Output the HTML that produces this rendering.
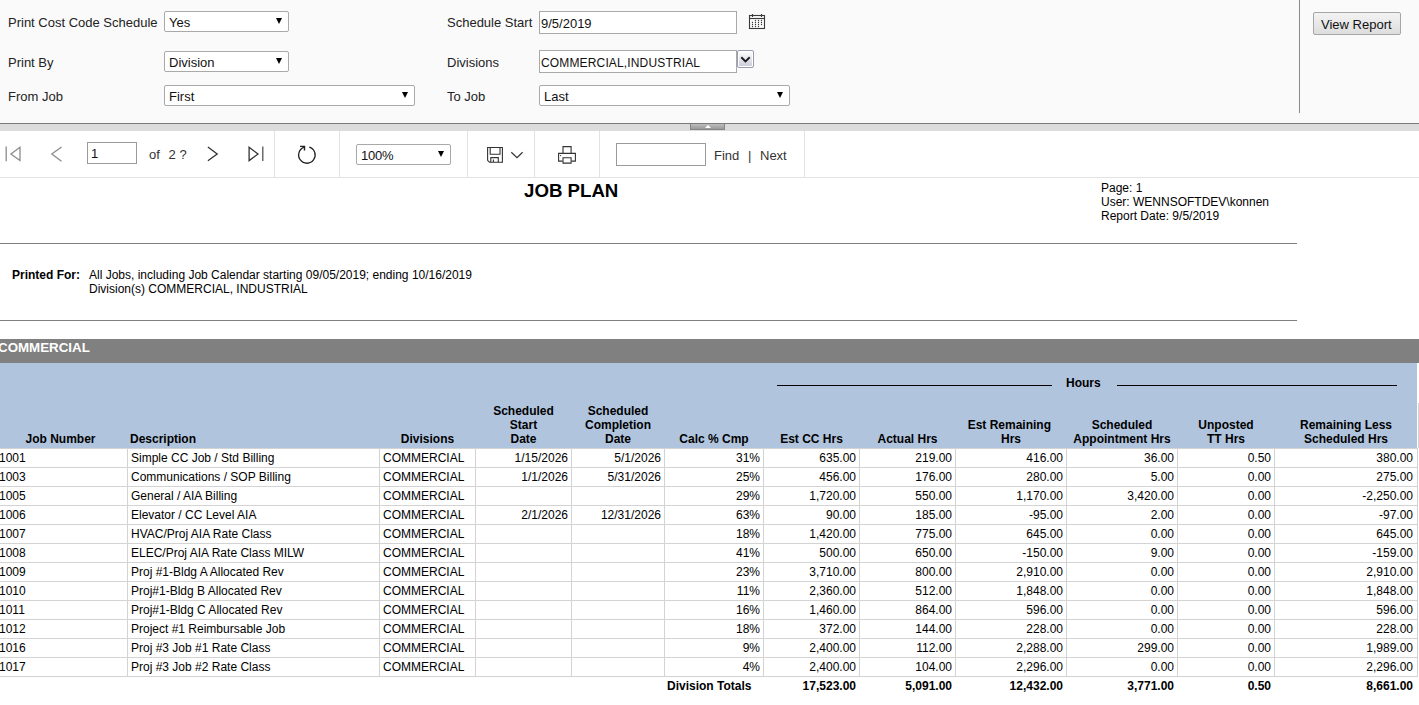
<!DOCTYPE html>
<html><head><meta charset="utf-8">
<style>
*{box-sizing:border-box}
html,body{margin:0;padding:0}
body{width:1419px;height:705px;overflow:hidden;position:relative;background:#fff;font-family:"Liberation Sans",sans-serif;color:#000}
.a{position:absolute}
#params{left:0;top:0;width:1419px;height:123px;background:#fafafa}
.lbl{position:absolute;font-size:13px;color:#222;white-space:nowrap;line-height:15px}
.sel{position:absolute;background:#fff;border:1px solid #a9a9a9;border-radius:2px;font-size:13px;color:#111;line-height:15px;padding-left:4px;white-space:nowrap}
.sel .arr{position:absolute;width:0;height:0;border-left:3.5px solid transparent;border-right:3.5px solid transparent;border-top:6px solid #000}
.inp{position:absolute;background:#fff;border:1px solid #a9a9a9;font-size:13px;color:#111;line-height:15px;padding-left:2px;white-space:nowrap}
#splitter{left:0;top:123px;width:1419px;height:8px;border-top:1px solid #7a7a7a;background:#dcdcdc}
#tb{left:0;top:131px;width:1419px;height:47px;background:#fff;border-bottom:1px solid #e2e2e2}
.sep{position:absolute;top:0;width:1px;height:46px;background:#e2e2e2}
.tbt{position:absolute;font-size:13px;color:#333;white-space:nowrap;line-height:15px}
.rep{position:absolute;font-size:12px;line-height:14px;white-space:nowrap;color:#000}
.hr{position:absolute;height:1px;background:#808080}
table.d{position:absolute;border-collapse:collapse;table-layout:fixed;font-size:12px}
table.d td{border:1px solid #d3d3d3;height:19px;padding:0 3px;line-height:14px;white-space:nowrap;overflow:hidden}
table.d td.r{text-align:right}
.vl{position:absolute;top:448px;width:1px;height:229px;background:#d3d3d3}
.hl{position:absolute;left:0;width:1418px;height:1px;background:#d3d3d3}
.ct{position:absolute;font-size:12px;line-height:14px;white-space:nowrap;color:#000}
.ct.r{text-align:right}
.b{font-weight:bold}
.ht{position:absolute;font-size:12px;line-height:14px;white-space:nowrap;font-weight:bold;color:#000}
.ht.c{text-align:center}
</style></head>
<body>
<div id="params" class="a">
  <div class="lbl" style="left:8px;top:15px">Print Cost Code Schedule</div>
  <div class="sel" style="left:164px;top:11px;width:125px;height:21px"><span style="position:absolute;left:4px;top:3px">Yes</span><span class="arr" style="left:111px;top:6px"></span></div>
  <div class="lbl" style="left:8px;top:55px">Print By</div>
  <div class="sel" style="left:164px;top:51px;width:125px;height:21px"><span style="position:absolute;left:4px;top:3px">Division</span><span class="arr" style="left:111px;top:6px"></span></div>
  <div class="lbl" style="left:8px;top:89px">From Job</div>
  <div class="sel" style="left:164px;top:85px;width:251px;height:21px"><span style="position:absolute;left:4px;top:3px">First</span><span class="arr" style="left:237px;top:6px"></span></div>

  <div class="lbl" style="left:447px;top:15px">Schedule Start</div>
  <div class="inp" style="left:539px;top:11px;width:198px;height:23px"><span style="position:absolute;left:1px;top:4px">9/5/2019</span></div>
  <div class="lbl" style="left:447px;top:55px">Divisions</div>
  <div class="inp" style="left:539px;top:50px;width:198px;height:23px"><span style="position:absolute;left:1px;top:5px;font-size:12px;letter-spacing:0.15px">COMMERCIAL,INDUSTRIAL</span></div>
  <svg class="a" style="left:745px;top:10px" width="25" height="22" viewBox="745 10 25 22" fill="none">
    <rect x="749.5" y="15.5" width="15" height="13" stroke="#3a3a3a" stroke-width="1.1"/>
    <line x1="749.5" y1="18.5" x2="764.5" y2="18.5" stroke="#3a3a3a" stroke-width="1.1"/>
    <line x1="752.5" y1="14" x2="752.5" y2="17" stroke="#3a3a3a" stroke-width="1.1"/>
    <line x1="761.5" y1="14" x2="761.5" y2="17" stroke="#3a3a3a" stroke-width="1.1"/>
    <g fill="#3a3a3a">
      <circle cx="755.5" cy="20.5" r="0.65"/><circle cx="758.5" cy="20.5" r="0.65"/><circle cx="761.5" cy="20.5" r="0.65"/>
      <circle cx="752.5" cy="22.5" r="0.65"/><circle cx="755.5" cy="22.5" r="0.65"/><circle cx="758.5" cy="22.5" r="0.65"/><circle cx="761.5" cy="22.5" r="0.65"/>
      <circle cx="752.5" cy="24.5" r="0.65"/><circle cx="755.5" cy="24.5" r="0.65"/><circle cx="758.5" cy="24.5" r="0.65"/><circle cx="761.5" cy="24.5" r="0.65"/>
      <circle cx="752.5" cy="26.5" r="0.65"/><circle cx="755.5" cy="26.5" r="0.65"/><circle cx="758.5" cy="26.5" r="0.65"/>
    </g>
  </svg>
  <div class="a" style="left:737px;top:50px;width:17px;height:18px;border:1px solid #999bb0;border-radius:2px;background:linear-gradient(#ffffff,#c8cad9);box-shadow:inset 0 0 0 1px #fff"></div>
  <svg class="a" style="left:737px;top:50px" width="17" height="18" viewBox="737 50 17 18" fill="none"><path d="M741.3 57.3 L745.5 61.4 L749.7 57.3" stroke="#1a1a1a" stroke-width="1.9"/></svg>
  <div class="lbl" style="left:447px;top:89px">To Job</div>
  <div class="sel" style="left:539px;top:85px;width:251px;height:21px"><span style="position:absolute;left:4px;top:3px">Last</span><span class="arr" style="left:237px;top:6px"></span></div>

  <div class="a" style="left:1299px;top:0;width:1px;height:113px;background:#8a8a8a"></div>
  <div class="a" style="left:1313px;top:12px;width:88px;height:23px;border:1px solid #a6a6a6;border-radius:2px;background:linear-gradient(#f3f3f3,#dddddd);font-size:13px;color:#111;line-height:15px"><span style="position:absolute;left:7px;top:4px">View Report</span></div>
</div>
<div id="splitter" class="a"><div class="a" style="left:690px;top:0;width:35px;height:6px;border:1px solid #858585;border-top:0;background:linear-gradient(#bdbdbd,#9a9a9a)"><span class="a" style="left:14px;top:1px;width:0;height:0;border-left:3px solid transparent;border-right:3px solid transparent;border-bottom:3px solid #fff"></span></div></div>

<div id="tb" class="a">
  <div class="sep" style="left:274px"></div>
  <div class="sep" style="left:339px"></div>
  <div class="sep" style="left:467px"></div>
  <div class="sep" style="left:534px"></div>
  <div class="sep" style="left:599px"></div>
  <div class="sep" style="left:804px"></div>
  <svg class="a" style="left:0;top:0" width="830" height="46" viewBox="0 131 830 46" fill="none">
    <g stroke="#8c8c8c" stroke-width="1.3">
      <line x1="6.2" y1="146.4" x2="6.2" y2="161.3"/>
      <path d="M20 147.2 L10.9 154.1 L20 160.6 Z" stroke-linejoin="miter"/>
      <path d="M61.5 146.9 L51.8 154.1 L61.5 161.2"/>
    </g>
    <g stroke="#333" stroke-width="1.3">
      <path d="M207.9 147.1 L217.2 154 L207.9 160.7"/>
      <path d="M249.1 147.2 L258 154 L249.1 160.6 Z"/>
    </g>
    <line x1="262.8" y1="146.5" x2="262.8" y2="161.1" stroke="#555" stroke-width="1.3"/>
    <g stroke="#222" stroke-width="1.3">
      <path d="M309.3 147.1 A 8.25 8.25 0 1 1 304.2 147.2"/>
      <path d="M300 146.4 L304.5 146.4 L304.5 150.6" stroke-width="1.4"/>
    </g>
    <g stroke="#333" stroke-width="1.1">
      <path d="M487.6 147.5 H502.4 V162.2 H489.5 L487.6 160.3 Z"/>
      <path d="M490.2 147.5 V154.3 H500 V147.5"/>
      <path d="M490.8 162.2 V157.6 H498.3 V162.2"/>
      <line x1="493.4" y1="159.6" x2="493.4" y2="162" />
    </g>
    <path d="M511.3 152.3 L517 157.6 L522.6 152.3" stroke="#333" stroke-width="1.2"/>
    <g stroke="#333" stroke-width="1.1">
      <path d="M563 153 V146.6 H571.1 V153"/>
      <path d="M562.6 161.1 H558.6 V153.4 H575.4 V161.1 H571.4"/>
      <path d="M563 157.8 H571.1 V163.1 H563 Z"/>
    </g>
    <circle cx="560.6" cy="155.6" r="0.6" fill="#333"/>
  </svg>
  <div class="a" style="left:87px;top:11px;width:50px;height:22px;border:1px solid #9a9a9a;background:#fff"></div>
  <div class="tbt" style="left:91px;top:15px;color:#111">1</div>
  <div class="tbt" style="left:149px;top:16px">of</div><div class="tbt" style="left:168.5px;top:16px">2</div><div class="tbt" style="left:179.5px;top:16px">?</div>
  <div class="a" style="left:356px;top:13px;width:95px;height:21px;border:1px solid #a9a9a9;border-radius:2px;background:#fff"><span class="tbt" style="left:4px;top:3px;color:#111;letter-spacing:-0.2px">100%</span><span class="a" style="left:81px;top:6px;width:0;height:0;border-left:3px solid transparent;border-right:3px solid transparent;border-top:6px solid #000"></span></div>
  <div class="a" style="left:616px;top:12px;width:90px;height:23px;border:1px solid #9a9a9a;background:#fff"></div>
  <div class="tbt" style="left:714px;top:17px">Find</div>
  <div class="tbt" style="left:748px;top:17px">|</div>
  <div class="tbt" style="left:760px;top:17px">Next</div>
</div>

<div id="report">
  <div class="rep" style="left:524px;top:181px;font-size:18.67px;font-weight:bold;line-height:20px">JOB PLAN</div>
  <div class="rep" style="left:1101px;top:181px">Page: 1<br>User: WENNSOFTDEV\konnen<br>Report Date: 9/5/2019</div>
  <div class="hr" style="left:0;top:243px;width:1297px"></div>
  <div class="rep" style="left:12px;top:268px;font-weight:bold">Printed For:</div>
  <div class="rep" style="left:89px;top:268px">All Jobs, including Job Calendar starting 09/05/2019; ending 10/16/2019<br>Division(s) COMMERCIAL, INDUSTRIAL</div>
  <div class="hr" style="left:0;top:320px;width:1297px"></div>
  <div class="a" style="left:0;top:339px;width:1419px;height:24px;background:#808080"></div>
  <div class="rep" style="left:-2px;top:340px;font-size:13.33px;font-weight:bold;color:#fff;line-height:15px">COMMERCIAL</div>
  <div class="a" style="left:0;top:363px;width:1417px;height:85px;background:#b0c4de"></div>
<div class="a" style="left:777px;top:385px;width:275px;height:1px;background:#000"></div>
<div class="ht" style="left:1066px;top:376px">Hours</div>
<div class="a" style="left:1117px;top:385px;width:280px;height:1px;background:#000"></div>
<!--T-->
<div class="vl" style="left:127px"></div>
<div class="vl" style="left:379px"></div>
<div class="vl" style="left:475px"></div>
<div class="vl" style="left:571px"></div>
<div class="vl" style="left:664px"></div>
<div class="vl" style="left:763px"></div>
<div class="vl" style="left:859px"></div>
<div class="vl" style="left:955px"></div>
<div class="vl" style="left:1066px"></div>
<div class="vl" style="left:1177px"></div>
<div class="vl" style="left:1274px"></div>
<div class="vl" style="left:1417px"></div>
<div class="hl" style="top:448px"></div>
<div class="hl" style="top:467px"></div>
<div class="hl" style="top:486px"></div>
<div class="hl" style="top:505px"></div>
<div class="hl" style="top:524px"></div>
<div class="hl" style="top:543px"></div>
<div class="hl" style="top:562px"></div>
<div class="hl" style="top:581px"></div>
<div class="hl" style="top:600px"></div>
<div class="hl" style="top:619px"></div>
<div class="hl" style="top:638px"></div>
<div class="hl" style="top:657px"></div>
<div class="hl" style="top:676px"></div>
<div class="ct" style="left:-1px;top:451px">1001</div>
<div class="ct" style="left:131px;top:451px">Simple CC Job / Std Billing</div>
<div class="ct" style="left:383px;top:451px">COMMERCIAL</div>
<div class="ct r" style="left:476px;width:92px;top:451px">1/15/2026</div>
<div class="ct r" style="left:572px;width:89px;top:451px">5/1/2026</div>
<div class="ct r" style="left:665px;width:95px;top:451px">31%</div>
<div class="ct r" style="left:764px;width:92px;top:451px">635.00</div>
<div class="ct r" style="left:860px;width:92px;top:451px">219.00</div>
<div class="ct r" style="left:956px;width:107px;top:451px">416.00</div>
<div class="ct r" style="left:1067px;width:107px;top:451px">36.00</div>
<div class="ct r" style="left:1178px;width:93px;top:451px">0.50</div>
<div class="ct r" style="left:1275px;width:138px;top:451px">380.00</div>
<div class="ct" style="left:-1px;top:470px">1003</div>
<div class="ct" style="left:131px;top:470px">Communications / SOP Billing</div>
<div class="ct" style="left:383px;top:470px">COMMERCIAL</div>
<div class="ct r" style="left:476px;width:92px;top:470px">1/1/2026</div>
<div class="ct r" style="left:572px;width:89px;top:470px">5/31/2026</div>
<div class="ct r" style="left:665px;width:95px;top:470px">25%</div>
<div class="ct r" style="left:764px;width:92px;top:470px">456.00</div>
<div class="ct r" style="left:860px;width:92px;top:470px">176.00</div>
<div class="ct r" style="left:956px;width:107px;top:470px">280.00</div>
<div class="ct r" style="left:1067px;width:107px;top:470px">5.00</div>
<div class="ct r" style="left:1178px;width:93px;top:470px">0.00</div>
<div class="ct r" style="left:1275px;width:138px;top:470px">275.00</div>
<div class="ct" style="left:-1px;top:489px">1005</div>
<div class="ct" style="left:131px;top:489px">General / AIA Billing</div>
<div class="ct" style="left:383px;top:489px">COMMERCIAL</div>
<div class="ct r" style="left:665px;width:95px;top:489px">29%</div>
<div class="ct r" style="left:764px;width:92px;top:489px">1,720.00</div>
<div class="ct r" style="left:860px;width:92px;top:489px">550.00</div>
<div class="ct r" style="left:956px;width:107px;top:489px">1,170.00</div>
<div class="ct r" style="left:1067px;width:107px;top:489px">3,420.00</div>
<div class="ct r" style="left:1178px;width:93px;top:489px">0.00</div>
<div class="ct r" style="left:1275px;width:138px;top:489px">-2,250.00</div>
<div class="ct" style="left:-1px;top:508px">1006</div>
<div class="ct" style="left:131px;top:508px">Elevator / CC Level AIA</div>
<div class="ct" style="left:383px;top:508px">COMMERCIAL</div>
<div class="ct r" style="left:476px;width:92px;top:508px">2/1/2026</div>
<div class="ct r" style="left:572px;width:89px;top:508px">12/31/2026</div>
<div class="ct r" style="left:665px;width:95px;top:508px">63%</div>
<div class="ct r" style="left:764px;width:92px;top:508px">90.00</div>
<div class="ct r" style="left:860px;width:92px;top:508px">185.00</div>
<div class="ct r" style="left:956px;width:107px;top:508px">-95.00</div>
<div class="ct r" style="left:1067px;width:107px;top:508px">2.00</div>
<div class="ct r" style="left:1178px;width:93px;top:508px">0.00</div>
<div class="ct r" style="left:1275px;width:138px;top:508px">-97.00</div>
<div class="ct" style="left:-1px;top:527px">1007</div>
<div class="ct" style="left:131px;top:527px">HVAC/Proj AIA Rate Class</div>
<div class="ct" style="left:383px;top:527px">COMMERCIAL</div>
<div class="ct r" style="left:665px;width:95px;top:527px">18%</div>
<div class="ct r" style="left:764px;width:92px;top:527px">1,420.00</div>
<div class="ct r" style="left:860px;width:92px;top:527px">775.00</div>
<div class="ct r" style="left:956px;width:107px;top:527px">645.00</div>
<div class="ct r" style="left:1067px;width:107px;top:527px">0.00</div>
<div class="ct r" style="left:1178px;width:93px;top:527px">0.00</div>
<div class="ct r" style="left:1275px;width:138px;top:527px">645.00</div>
<div class="ct" style="left:-1px;top:546px">1008</div>
<div class="ct" style="left:131px;top:546px">ELEC/Proj AIA Rate Class MILW</div>
<div class="ct" style="left:383px;top:546px">COMMERCIAL</div>
<div class="ct r" style="left:665px;width:95px;top:546px">41%</div>
<div class="ct r" style="left:764px;width:92px;top:546px">500.00</div>
<div class="ct r" style="left:860px;width:92px;top:546px">650.00</div>
<div class="ct r" style="left:956px;width:107px;top:546px">-150.00</div>
<div class="ct r" style="left:1067px;width:107px;top:546px">9.00</div>
<div class="ct r" style="left:1178px;width:93px;top:546px">0.00</div>
<div class="ct r" style="left:1275px;width:138px;top:546px">-159.00</div>
<div class="ct" style="left:-1px;top:565px">1009</div>
<div class="ct" style="left:131px;top:565px">Proj #1-Bldg A Allocated Rev</div>
<div class="ct" style="left:383px;top:565px">COMMERCIAL</div>
<div class="ct r" style="left:665px;width:95px;top:565px">23%</div>
<div class="ct r" style="left:764px;width:92px;top:565px">3,710.00</div>
<div class="ct r" style="left:860px;width:92px;top:565px">800.00</div>
<div class="ct r" style="left:956px;width:107px;top:565px">2,910.00</div>
<div class="ct r" style="left:1067px;width:107px;top:565px">0.00</div>
<div class="ct r" style="left:1178px;width:93px;top:565px">0.00</div>
<div class="ct r" style="left:1275px;width:138px;top:565px">2,910.00</div>
<div class="ct" style="left:-1px;top:584px">1010</div>
<div class="ct" style="left:131px;top:584px">Proj#1-Bldg B Allocated Rev</div>
<div class="ct" style="left:383px;top:584px">COMMERCIAL</div>
<div class="ct r" style="left:665px;width:95px;top:584px">11%</div>
<div class="ct r" style="left:764px;width:92px;top:584px">2,360.00</div>
<div class="ct r" style="left:860px;width:92px;top:584px">512.00</div>
<div class="ct r" style="left:956px;width:107px;top:584px">1,848.00</div>
<div class="ct r" style="left:1067px;width:107px;top:584px">0.00</div>
<div class="ct r" style="left:1178px;width:93px;top:584px">0.00</div>
<div class="ct r" style="left:1275px;width:138px;top:584px">1,848.00</div>
<div class="ct" style="left:-1px;top:603px">1011</div>
<div class="ct" style="left:131px;top:603px">Proj#1-Bldg C Allocated Rev</div>
<div class="ct" style="left:383px;top:603px">COMMERCIAL</div>
<div class="ct r" style="left:665px;width:95px;top:603px">16%</div>
<div class="ct r" style="left:764px;width:92px;top:603px">1,460.00</div>
<div class="ct r" style="left:860px;width:92px;top:603px">864.00</div>
<div class="ct r" style="left:956px;width:107px;top:603px">596.00</div>
<div class="ct r" style="left:1067px;width:107px;top:603px">0.00</div>
<div class="ct r" style="left:1178px;width:93px;top:603px">0.00</div>
<div class="ct r" style="left:1275px;width:138px;top:603px">596.00</div>
<div class="ct" style="left:-1px;top:622px">1012</div>
<div class="ct" style="left:131px;top:622px">Project #1 Reimbursable Job</div>
<div class="ct" style="left:383px;top:622px">COMMERCIAL</div>
<div class="ct r" style="left:665px;width:95px;top:622px">18%</div>
<div class="ct r" style="left:764px;width:92px;top:622px">372.00</div>
<div class="ct r" style="left:860px;width:92px;top:622px">144.00</div>
<div class="ct r" style="left:956px;width:107px;top:622px">228.00</div>
<div class="ct r" style="left:1067px;width:107px;top:622px">0.00</div>
<div class="ct r" style="left:1178px;width:93px;top:622px">0.00</div>
<div class="ct r" style="left:1275px;width:138px;top:622px">228.00</div>
<div class="ct" style="left:-1px;top:641px">1016</div>
<div class="ct" style="left:131px;top:641px">Proj #3 Job #1 Rate Class</div>
<div class="ct" style="left:383px;top:641px">COMMERCIAL</div>
<div class="ct r" style="left:665px;width:95px;top:641px">9%</div>
<div class="ct r" style="left:764px;width:92px;top:641px">2,400.00</div>
<div class="ct r" style="left:860px;width:92px;top:641px">112.00</div>
<div class="ct r" style="left:956px;width:107px;top:641px">2,288.00</div>
<div class="ct r" style="left:1067px;width:107px;top:641px">299.00</div>
<div class="ct r" style="left:1178px;width:93px;top:641px">0.00</div>
<div class="ct r" style="left:1275px;width:138px;top:641px">1,989.00</div>
<div class="ct" style="left:-1px;top:660px">1017</div>
<div class="ct" style="left:131px;top:660px">Proj #3 Job #2 Rate Class</div>
<div class="ct" style="left:383px;top:660px">COMMERCIAL</div>
<div class="ct r" style="left:665px;width:95px;top:660px">4%</div>
<div class="ct r" style="left:764px;width:92px;top:660px">2,400.00</div>
<div class="ct r" style="left:860px;width:92px;top:660px">104.00</div>
<div class="ct r" style="left:956px;width:107px;top:660px">2,296.00</div>
<div class="ct r" style="left:1067px;width:107px;top:660px">0.00</div>
<div class="ct r" style="left:1178px;width:93px;top:660px">0.00</div>
<div class="ct r" style="left:1275px;width:138px;top:660px">2,296.00</div>
<div class="ct b" style="left:667px;top:679px">Division Totals</div>
<div class="ct r b" style="left:764px;width:92px;top:679px">17,523.00</div>
<div class="ct r b" style="left:860px;width:92px;top:679px">5,091.00</div>
<div class="ct r b" style="left:956px;width:107px;top:679px">12,432.00</div>
<div class="ct r b" style="left:1067px;width:107px;top:679px">3,771.00</div>
<div class="ct r b" style="left:1178px;width:93px;top:679px">0.50</div>
<div class="ct r b" style="left:1275px;width:138px;top:679px">8,661.00</div>
<div class="ht c" style="left:-5px;width:131px;top:432px">Job Number</div>
<div class="ht" style="left:130px;top:432px">Description</div>
<div class="ht c" style="left:380px;width:95px;top:432px">Divisions</div>
<div class="ht c" style="left:476px;width:95px;top:404px">Scheduled<br>Start<br>Date</div>
<div class="ht c" style="left:572px;width:92px;top:404px">Scheduled<br>Completion<br>Date</div>
<div class="ht c" style="left:665px;width:98px;top:432px">Calc % Cmp</div>
<div class="ht c" style="left:764px;width:95px;top:432px">Est CC Hrs</div>
<div class="ht c" style="left:860px;width:95px;top:432px">Actual Hrs</div>
<div class="ht c" style="left:956px;width:110px;top:418px">Est Remaining&nbsp;<br>Hrs</div>
<div class="ht c" style="left:1067px;width:110px;top:418px">Scheduled<br>Appointment Hrs</div>
<div class="ht c" style="left:1178px;width:96px;top:418px">Unposted<br>TT Hrs</div>
<div class="ht c" style="left:1275px;width:142px;top:418px">Remaining Less<br>Scheduled Hrs</div>
<div class="a" style="left:1418px;top:403px;width:1px;height:45px;background:#d3d3d3"></div>
<!--/T-->
</div>
</body></html>
